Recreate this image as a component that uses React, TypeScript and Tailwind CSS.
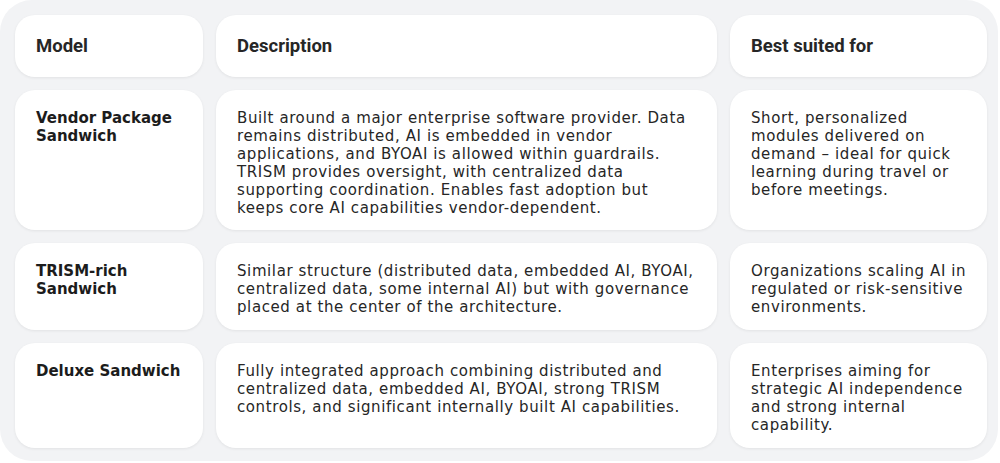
const rows = [
  {
    model: ["Vendor Package", "Sandwich"],
    description: [
      "Built around a major enterprise software provider. Data",
      "remains distributed, AI is embedded in vendor",
      "applications, and BYOAI is allowed within guardrails.",
      "TRISM provides oversight, with centralized data",
      "supporting coordination. Enables fast adoption but",
      "keeps core AI capabilities vendor-dependent.",
    ],
    suited: [
      "Short, personalized",
      "modules delivered on",
      "demand – ideal for quick",
      "learning during travel or",
      "before meetings.",
    ],
  },
  {
    model: ["TRISM-rich", "Sandwich"],
    description: [
      "Similar structure (distributed data, embedded AI, BYOAI,",
      "centralized data, some internal AI) but with governance",
      "placed at the center of the architecture.",
    ],
    suited: ["Organizations scaling AI in", "regulated or risk-sensitive", "environments."],
  },
  {
    model: ["Deluxe Sandwich"],
    description: [
      "Fully integrated approach combining distributed and",
      "centralized data, embedded AI, BYOAI, strong TRISM",
      "controls, and significant internally built AI capabilities.",
    ],
    suited: [
      "Enterprises aiming for",
      "strategic AI independence",
      "and strong internal",
      "capability.",
    ],
  },
]

const card = "bg-white rounded-[20px] shadow-[0_1px_3px_rgba(0,0,0,0.07)]"

const Lines = ({ lines, bold }: { lines: string[]; bold?: boolean }) => (
  <div className={bold ? "font-bold text-[#1c1c1c]" : "text-[#262626] tracking-[0.6px]"}>
    {lines.map((l) => (
      <span key={l} className="block whitespace-nowrap">{l}</span>
    ))}
  </div>
)

export default function App() {
  return (
    <div className="w-[1000px] h-[463px] bg-white">
      <div className="w-[998px] h-[461px] rounded-[32px] bg-[#f2f3f5] p-[15px]">
        <div className="grid grid-cols-[188px_501px_257px] grid-rows-[62px_140px_87px_105px] gap-x-[13px] gap-y-[13px] text-[15px] leading-[18px] [font-family:'DejaVu_Sans',sans-serif]">
          {["Model", "Description", "Best suited for"].map((h) => (
            <div key={h} className={`${card} flex items-center px-[21px]`}>
              <span className="text-[18.5px] font-bold text-[#262626] [font-family:Roboto,sans-serif]">{h}</span>
            </div>
          ))}
          {rows.map((r) => (
            <>
              <div key={r.model[0]} className={`${card} px-[21px] pt-[19px]`}>
                <Lines lines={r.model} bold />
              </div>
              <div className={`${card} px-[21px] pt-[19px]`}>
                <Lines lines={r.description} />
              </div>
              <div className={`${card} px-[21px] pt-[19px]`}>
                <Lines lines={r.suited} />
              </div>
            </>
          ))}
        </div>
      </div>
    </div>
  )
}
